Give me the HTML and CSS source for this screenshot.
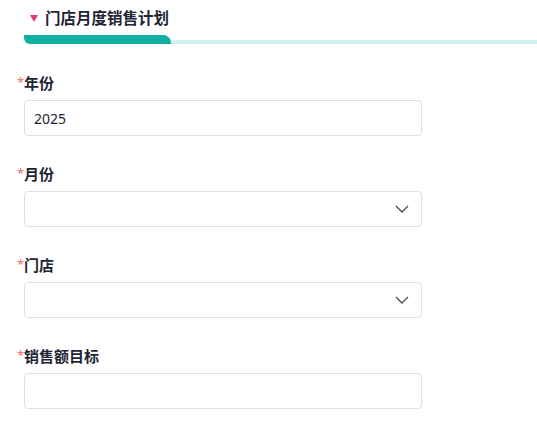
FILE: index.html
```html
<!DOCTYPE html>
<html lang="zh">
<head>
<meta charset="utf-8">
<link rel="stylesheet" href="styles.css">
</head>
<body>
<div class="section">
  <div class="section-head">
    <span class="tri"></span>
    <span class="section-title">门店月度销售计划</span>
  </div>
  <div class="tabline"><div class="tab-active"></div><div class="tab-rest"></div></div>
</div>
<form class="form">
  <div class="item">
    <label class="label"><span class="req">*</span>年份</label>
    <div class="control"><span class="value">2025</span></div>
  </div>
  <div class="item">
    <label class="label"><span class="req">*</span>月份</label>
    <div class="control select"><span class="value"></span>
      <svg class="chev" width="14" height="8" viewBox="0 0 14 8"><path d="M1 1 L7 7 L13 1" fill="none" stroke="#4a4f5a" stroke-width="1.4"/></svg>
    </div>
  </div>
  <div class="item">
    <label class="label"><span class="req">*</span>门店</label>
    <div class="control select"><span class="value"></span>
      <svg class="chev" width="14" height="8" viewBox="0 0 14 8"><path d="M1 1 L7 7 L13 1" fill="none" stroke="#4a4f5a" stroke-width="1.4"/></svg>
    </div>
  </div>
  <div class="item">
    <label class="label"><span class="req">*</span>销售额目标</label>
    <div class="control"><span class="value"></span></div>
  </div>
</form>
</body>
</html>
```
FILE: styles.css
```css
html, body {
  margin: 0;
  padding: 0;
  background: #fff;
}
body {
  font-family: "Noto Sans", "Noto Sans CJK SC", sans-serif;
  color: #1f2633;
}
.section {
  padding-top: 8px;
}
.section-head {
  display: flex;
  align-items: center;
  height: 20px;
  padding-left: 30px;
}
.tri {
  width: 0;
  height: 0;
  border-left: 4.5px solid transparent;
  border-right: 4.5px solid transparent;
  border-top: 7px solid #e23c74;
  margin-right: 7px;
  margin-top: 1px;
}
.section-title {
  font-size: 15.5px;
  font-weight: 700;
  color: #1f2633;
  line-height: 20px;
}
.tabline {
  display: flex;
  align-items: flex-end;
  margin-top: 7px;
  padding-left: 24px;
}
.tab-active {
  width: 147px;
  height: 9px;
  background: #11b0a4;
  border-radius: 0 8px 0 6px;
}
.tab-rest {
  flex: 1;
  height: 4px;
  background: #cff0ec;
}
.form {
  display: flex;
  flex-direction: column;
  gap: 28px;
  padding-left: 24px;
  margin-top: 29px;
}
.item {
  display: flex;
  flex-direction: column;
  width: 398px;
}
.label {
  position: relative;
  font-size: 15px;
  font-weight: 700;
  line-height: 20px;
  height: 20px;
  margin-bottom: 7px;
  color: #1f2633;
}
.req {
  position: absolute;
  left: -7px;
  top: -1px;
  color: #f56c6c;
  font-weight: 400;
  font-size: 13px;
}
.control {
  box-sizing: border-box;
  height: 36px;
  border: 1px solid #dcdfe6;
  border-radius: 4px;
  display: flex;
  align-items: center;
  padding: 0 12px 0 9px;
  font-size: 14px;
  color: #1f2633;
}
.value {
  flex: 1;
}
```
